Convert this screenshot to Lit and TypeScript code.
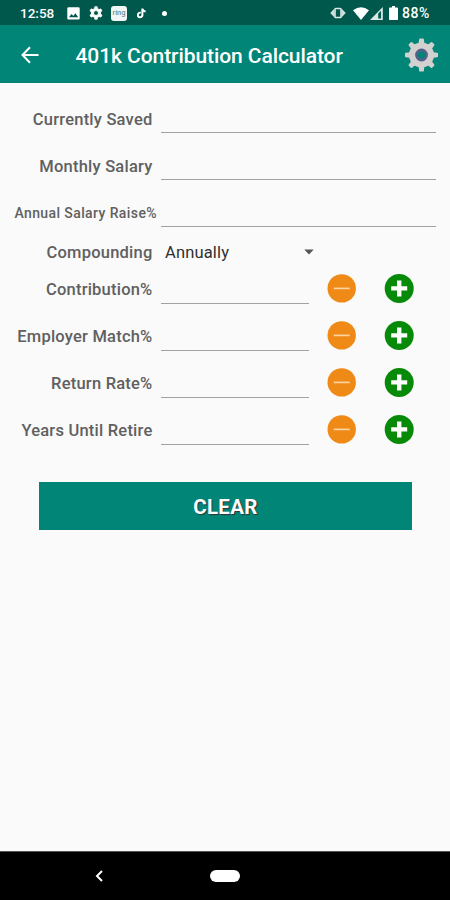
import { LitElement, html, css } from "lit";
import { customElement, property } from "lit/decorators.js";

const gearPath = (cx: number, cy: number, teeth: number, outer: number, inner: number, tip = 0.17, base = 0.3) => {
  const step = (Math.PI * 2) / teeth;
  const pts: string[] = [];
  for (let i = 0; i < teeth; i++) {
    const a = i * step - Math.PI / 2;
    for (const [r, d] of [[inner, -base], [outer, -tip], [outer, tip], [inner, base]]) {
      pts.push(`${(cx + r * Math.cos(a + d * step)).toFixed(2)} ${(cy + r * Math.sin(a + d * step)).toFixed(2)}`);
    }
  }
  return `M${pts.join("L")}Z`;
};

@customElement("status-bar")
class StatusBar extends LitElement {
  static styles = css`
    :host { display: flex; align-items: center; height: 25px; box-sizing: border-box; padding: 1px 18px 0 20px; background: #00574b; color: #fff; font: 500 13.5px/24px Roboto, sans-serif; }
    svg { display: block; flex: none; }
    .time { width: 35px; margin-right: 12px; }
    .left { display: flex; align-items: center; flex: 1; }
    .pic { margin-right: 9px; }
    .cog { margin-right: 8px; }
    .ring { box-sizing: border-box; width: 16px; height: 15px; border-radius: 3px; background: #f2f7f6; color: #6f918c; font: 500 7.5px/14px Roboto, sans-serif; text-align: center; margin-right: 10px; }
    .note { margin-right: 16px; }
    .dot { width: 5px; height: 5px; border-radius: 50%; background: #fff; }
    .vib { margin-right: 7px; }
    .wifi { margin-right: 1px; }
    .cell { margin-right: 6px; }
    .bat { margin-right: 4px; }
    .pct { width: 30px; white-space: nowrap; font-size: 14px; line-height: 25px; letter-spacing: 0.6px; }
  `;
  render() {
    return html`
      <div class="left">
        <span class="time">12:58</span>
        <svg class="pic" width="13" height="13" viewBox="0 0 13 13"><rect x=".3" y=".3" width="12.4" height="12.2" rx="1.3" fill="#fff"/><path d="M2 10.2l2.6-3.3 1.7 2 2-2.7 2.9 4z" fill="#00574b"/></svg>
        <svg class="cog" width="14" height="14" viewBox="0 0 14 14"><path fill="#fff" stroke="#fff" stroke-linejoin="round" fill-rule="evenodd" d="${gearPath(7, 7, 6, 6.3, 4.6)}M7 4.5a2.5 2.5 0 1 0 0 5a2.5 2.5 0 1 0 0-5Z"/></svg>
        <span class="ring">ring</span>
        <svg class="note" width="9" height="11" viewBox="0 0 9 11"><path fill="none" stroke="#fff" stroke-width="2" d="M3.8 4.8a2.3 2.3 0 1 0 1.6 2.3V.5c.2 1.8 1.4 2.8 3.2 2.9"/></svg>
        <span class="dot"></span>
      </div>
      <svg class="vib" width="16" height="12" viewBox="0 0 16 12"><path d="M4.500 1.500v9L.2 6zM11.500 1.500v9L15.800 6z" fill="#cfdfdc"/><rect x="5" y="1.500" width="6" height="9" rx=".8" fill="none" stroke="#dbe8e6" stroke-width="1.6"/></svg>
      <svg class="wifi" width="16" height="13" viewBox="0 0 16 13"><path d="M0 3.2Q8-2.6 16 3.2L8 13z" fill="#fff"/></svg>
      <svg class="cell" width="13" height="13" viewBox="0 0 13 13"><path d="M12.8 0v13H0z" fill="#dbe8e6"/><path d="M8.2 6.500v4.900h2.800V3.700z" fill="#00574b"/></svg>
      <svg class="bat" width="9" height="14" viewBox="0 0 9 14"><path d="M3 0h3v1.5h2.3q.7 0 .7.7v11q0 .8-.7.8H.7Q0 14 0 13.200V2.200q0-.7.7-.7H3z" fill="#fff"/></svg>
      <span class="pct">88%</span>
    `;
  }
}

@customElement("app-bar")
class AppBar extends LitElement {
  static styles = css`
    :host { display: flex; align-items: center; height: 58px; box-sizing: border-box; padding: 1px 11px 0 21px; background: #008577; color: #fff; }
    svg { display: block; flex: none; }
    .title { flex: 1; margin: 2px 0 0 36.500px; font: 500 21px/30px Roboto, sans-serif; letter-spacing: -0.08px; white-space: nowrap; }
  `;
  render() {
    return html`
      <svg width="18" height="18" viewBox="0 0 18 18"><path d="M17.500 9H2M9 1.300L1.500 9L9 16.700" fill="none" stroke="#fff" stroke-width="2"/></svg>
      <h1 class="title">401k Contribution Calculator</h1>
      <svg width="35" height="36" viewBox="0 0 35 36">
        <path d="${gearPath(17.5, 18, 8, 15.6, 11.8, 0.11, 0.2)}" fill="#d2d1d0" stroke="#d2d1d0" stroke-width="2" stroke-linejoin="round"/>
        <circle cx="17.500" cy="18" r="5" fill="#008577" stroke="#53618a" stroke-width="2.800"/>
      </svg>
    `;
  }
}

@customElement("field-row")
class FieldRow extends LitElement {
  @property() label = "";
  @property({ type: Boolean }) stepper = false;
  @property({ type: Boolean }) small = false;
  static styles = css`
    :host { display: flex; height: 47px; }
    .label { width: 152.500px; flex: none; text-align: right; white-space: nowrap; font: 500 16.500px/49px Roboto, sans-serif; color: #606060; letter-spacing: 0.22px; }
    .label.stepped { line-height: 47px; }
    .label.small { width: 157px; font-size: 14px; line-height: 48px; letter-spacing: 0.4px; }
    .input { width: 275px; height: 37px; margin-left: 8.500px; border-bottom: 1px solid #a2a2a2; }
    .small + .input { margin-left: 4px; }
    .input.short { width: 148px; }
    .btn { display: block; margin-top: 7px; }
    .minus { margin-left: 18px; }
    .plus { margin-left: 27px; }
  `;
  render() {
    return html`
      <div class="label ${this.small ? "small" : ""} ${this.stepper ? "stepped" : ""}">${this.label}</div>
      <div class="input ${this.stepper ? "short" : ""}"></div>
      ${this.stepper
        ? html`
            <svg class="btn minus" width="30" height="30" viewBox="0 0 30 30"><circle cx="14.700" cy="15.400" r="14.200" fill="#ef8a17"/><path d="M6.700 15.400h16" stroke="#fbd3a0" stroke-width="1.700"/></svg>
            <svg class="btn plus" width="30" height="30" viewBox="0 0 30 30"><circle cx="15.200" cy="15.400" r="14.500" fill="#078a07"/><path d="M7.200 15.400h16M15.200 7.400v16" stroke="#fff" stroke-width="4.400"/></svg>`
        : ""}
    `;
  }
}

@customElement("app-root")
class AppRoot extends LitElement {
  static styles = css`
    :host { display: flex; flex-direction: column; height: 900px; background: #fafafa; overflow: hidden; }
    .form { flex: 1; padding-top: 12px; }
    .compound { display: flex; align-items: center; height: 30px; padding-top: 3px; box-sizing: border-box; font: 500 16.500px/30px Roboto, sans-serif; color: #606060; }
    .name { width: 152.500px; text-align: right; letter-spacing: 0.22px; }
    .value { width: 139px; margin-left: 12.500px; font-weight: 400; color: #303030; letter-spacing: 0.15px; }
    .compound svg { margin-top: -2px; }
    .clear { display: block; width: 373px; height: 48px; margin: 28px 0 0 39px; padding: 2px 0 0; border: 0; background: #008577; color: #fff; font: 700 20.500px/46px Roboto, sans-serif; letter-spacing: 0.3px; text-shadow: 1px 1px 1px #333; }
    .nav { display: flex; align-items: center; height: 49px; box-sizing: border-box; background: #000; border-top: 1px solid #555; padding-left: 95px; }
    .pill { width: 30px; height: 12px; border-radius: 6px; background: #fff; margin-left: 107px; }
  `;
  render() {
    return html`
      <status-bar></status-bar>
      <app-bar></app-bar>
      <main class="form">
        <field-row label="Currently Saved"></field-row>
        <field-row label="Monthly Salary"></field-row>
        <field-row label="Annual Salary Raise%" small></field-row>
        <div class="compound">
          <span class="name">Compounding</span><span class="value">Annually</span>
          <svg width="10" height="6" viewBox="0 0 10 6"><path d="M.3.5h9.400L5 5.500z" fill="#555"/></svg>
        </div>
        ${["Contribution%", "Employer Match%", "Return Rate%", "Years Until Retire"].map(
          (l) => html`<field-row label=${l} stepper></field-row>`
        )}
        <button class="clear">CLEAR</button>
      </main>
      <nav class="nav">
        <svg width="8" height="12" viewBox="0 0 8 12"><path d="M7 1L2 6l5 5" fill="none" stroke="#fff" stroke-width="2"/></svg>
        <span class="pill"></span>
      </nav>
    `;
  }
}
